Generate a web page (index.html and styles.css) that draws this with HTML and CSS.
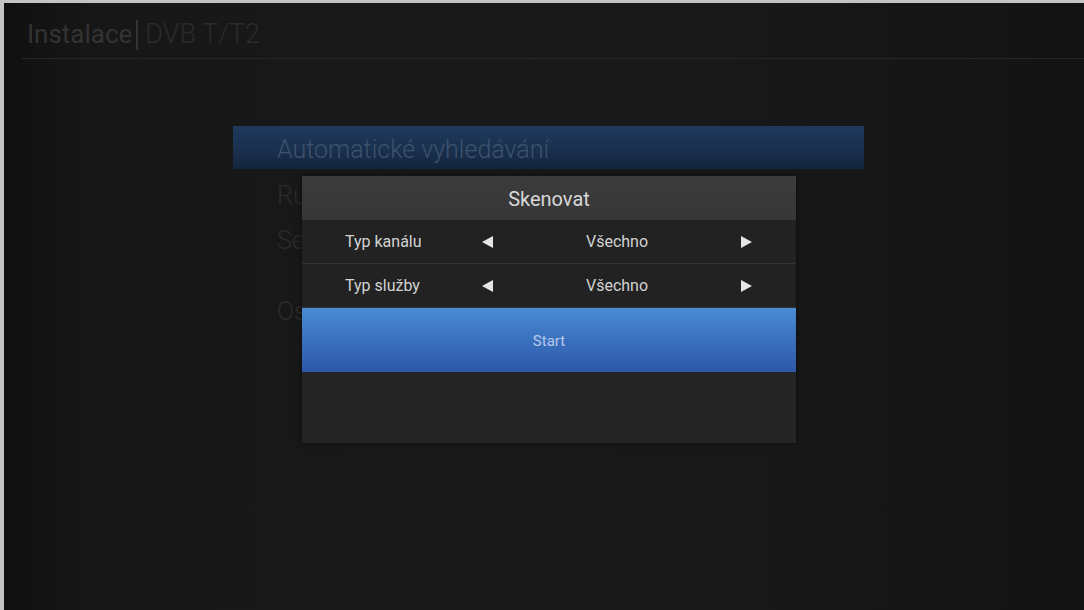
FILE: index.html
```html
<!DOCTYPE html>
<html lang="cs">
<head>
<meta charset="utf-8">
<title>Instalace – DVB T/T2</title>
<link rel="stylesheet" href="styles.css">
</head>
<body>
<div class="frame">
  <div class="screen">
    <header class="top">
      <span class="top-title">Instalace</span>
      <span class="top-sep"></span>
      <span class="top-sub">DVB T/T2</span>
    </header>

    <div class="stage">
      <ul class="menu">
        <li class="menu-item is-active">Automatické vyhledávání</li>
        <li class="menu-item">Ruční vyhledávání</li>
        <li class="menu-item">Seznam kanálů</li>
        <li class="menu-item gap">Ostatní</li>
      </ul>

      <div class="dialog">
        <div class="dialog-title">Skenovat</div>
        <div class="opt-row">
          <span class="opt-label">Typ kanálu</span>
          <span class="arrow left"></span>
          <span class="opt-value">Všechno</span>
          <span class="arrow right"></span>
        </div>
        <div class="opt-row">
          <span class="opt-label">Typ služby</span>
          <span class="arrow left"></span>
          <span class="opt-value">Všechno</span>
          <span class="arrow right"></span>
        </div>
        <div class="start-btn">Start</div>
        <div class="dialog-foot"></div>
      </div>
    </div>
  </div>
</div>
</body>
</html>
```

FILE: styles.css
```css
* { box-sizing: border-box; }

html, body {
  margin: 0;
  padding: 0;
  width: 1084px;
  height: 610px;
  overflow: hidden;
  background: #c4c4c4;
  font-family: Roboto, "Noto Sans", "Liberation Sans", sans-serif;
}

.frame {
  width: 1084px;
  height: 610px;
  padding: 3px 0 0 4px;
}

.screen {
  width: 100%;
  height: 100%;
  background: linear-gradient(90deg, #101010 0%, #171717 8%, #191919 40%, #181818 70%, #131313 100%);
  display: flex;
  flex-direction: column;
}

/* header */
.top {
  height: 56px;
  margin-left: 18px;
  padding: 14px 0 0 5px;
  border-bottom: 1px solid #262626;
  display: flex;
  align-items: flex-start;
}
.top-title {
  font-size: 26px;
  line-height: 34px;
  color: #333;
  font-weight: 400;
}
.top-sep {
  width: 2px;
  height: 30px;
  margin: 3px 7px 0 4px;
  background: #333;
}
.top-sub {
  font-size: 27px;
  line-height: 34px;
  color: #2b2b2b;
  font-weight: 300;
}

/* menu underneath the dialog */
.stage {
  position: relative;
  flex: 1;
}
.menu {
  list-style: none;
  margin: 0;
  padding: 67px 0 0 229px;
  width: 860px;
}
.menu-item {
  height: 45px;
  padding-left: 44px;
  font-size: 25px;
  line-height: 45px;
  font-weight: 300;
  color: #2b2b2b;
}
.menu-item.is-active {
  height: 43px;
  margin-bottom: 4px;
  line-height: 47px;
  color: #3d526d;
  background: linear-gradient(180deg, #1f3a5c 0%, #1a3150 50%, #14253d 100%);
}
.menu-item.gap { margin-top: 26px; }

/* scan dialog */
.dialog {
  position: absolute;
  left: 298px;
  top: 117px;
  width: 494px;
  background: #232323;
  box-shadow: 0 0 6px rgba(0, 0, 0, 0.5);
}
.dialog-title {
  height: 44px;
  background: linear-gradient(180deg, #3c3c3c 0%, #363636 100%);
  color: #d8d8d8;
  font-size: 20px;
  line-height: 46px;
  text-align: center;
}
.opt-row {
  height: 44px;
  display: flex;
  align-items: center;
  background: #222;
  border-bottom: 1px solid #333;
  color: #d2d2d2;
  font-size: 16px;
}
.opt-row:last-of-type { border-bottom: none; }
.opt-label {
  width: 180px;
  padding-left: 43px;
}
.opt-value {
  width: 248px;
  text-align: center;
}
.arrow {
  width: 0;
  height: 0;
  border-top: 6px solid transparent;
  border-bottom: 6px solid transparent;
}
.arrow.left { border-right: 11px solid #e6e6e6; }
.arrow.right { border-left: 11px solid #e6e6e6; }

.start-btn {
  height: 64px;
  background: linear-gradient(180deg, #4a8bd2 0%, #3a70bf 50%, #2d58a7 100%);
  color: #b6cbea;
  font-size: 15px;
  line-height: 66px;
  text-align: center;
}
.dialog-foot {
  height: 71px;
  background: #242424;
}
```
